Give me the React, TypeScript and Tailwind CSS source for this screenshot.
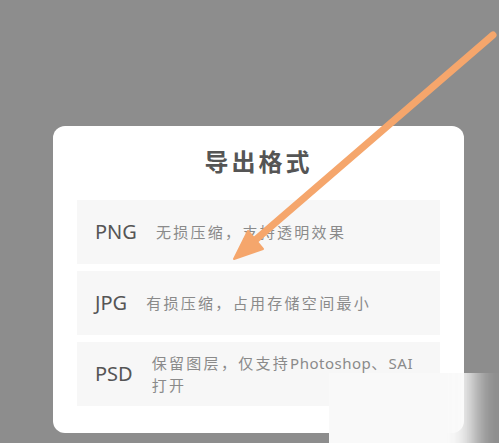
const formats = [
  { name: 'PNG', desc: '无损压缩，支持透明效果' },
  { name: 'JPG', desc: '有损压缩，占用存储空间最小' },
  { name: 'PSD', desc: '保留图层，仅支持Photoshop、SAI打开' },
];

// latin words get tighter spacing than the CJK text around them
function Desc({ text }: { text: string }) {
  return (
    <>
      {text.split(/([A-Za-z]+)/).map((part, i) =>
        /^[A-Za-z]+$/.test(part) ? (
          <span key={i} className="tracking-[0.5px]">
            {part}
          </span>
        ) : (
          part
        )
      )}
    </>
  );
}

function Arrow() {
  return (
    <svg
      className="absolute inset-0 pointer-events-none"
      width="499"
      height="443"
      viewBox="0 0 499 443"
    >
      <line
        x1="493"
        y1="35"
        x2="253"
        y2="242"
        stroke="#f5a66c"
        strokeWidth="7"
        strokeLinecap="round"
      />
      <polygon points="234,259 248,231 263,249" fill="#f5a66c" stroke="#f5a66c" strokeWidth="2" strokeLinejoin="round" />
    </svg>
  );
}

export default function App() {
  return (
    <div
      className="relative w-[499px] h-[443px] overflow-hidden bg-[#8d8d8d] pt-[126px] pl-[53px]"
      style={{ fontFamily: '"Noto Sans", "Noto Sans CJK SC", sans-serif' }}
    >
      <div className="w-[411px] rounded-[12px] bg-white px-[24px] pt-[20px] pb-[27px]">
        <h2 className="h-[32px] mb-[22px] text-center text-[24px] leading-[32px] font-bold tracking-[3px] text-[#555]">
          导出格式
        </h2>
        <div className="flex flex-col gap-[7px]">
          {formats.map((f) => (
            <div
              key={f.name}
              className="h-[64px] flex items-center gap-[19px] bg-[#f7f7f7] pl-[18px] pr-[12px]"
            >
              <span className="text-[20px] text-[#555]">{f.name}</span>
              <span className="flex-1 text-[15px] leading-[22px] tracking-[2.3px] text-[#8a8a8a]">
                <Desc text={f.desc} />
              </span>
            </div>
          ))}
        </div>
      </div>

      <Arrow />

      {/* faded patch in the lower right corner: sharp on top/left, soft to the right */}
      <div className="absolute left-[329px] top-[373px] w-[170px] h-[70px] overflow-hidden">
        <div className="absolute -left-[30px] -top-[30px] w-[175px] h-[140px] bg-[#f9f9f9] blur-[12px]" />
      </div>
    </div>
  );
}
